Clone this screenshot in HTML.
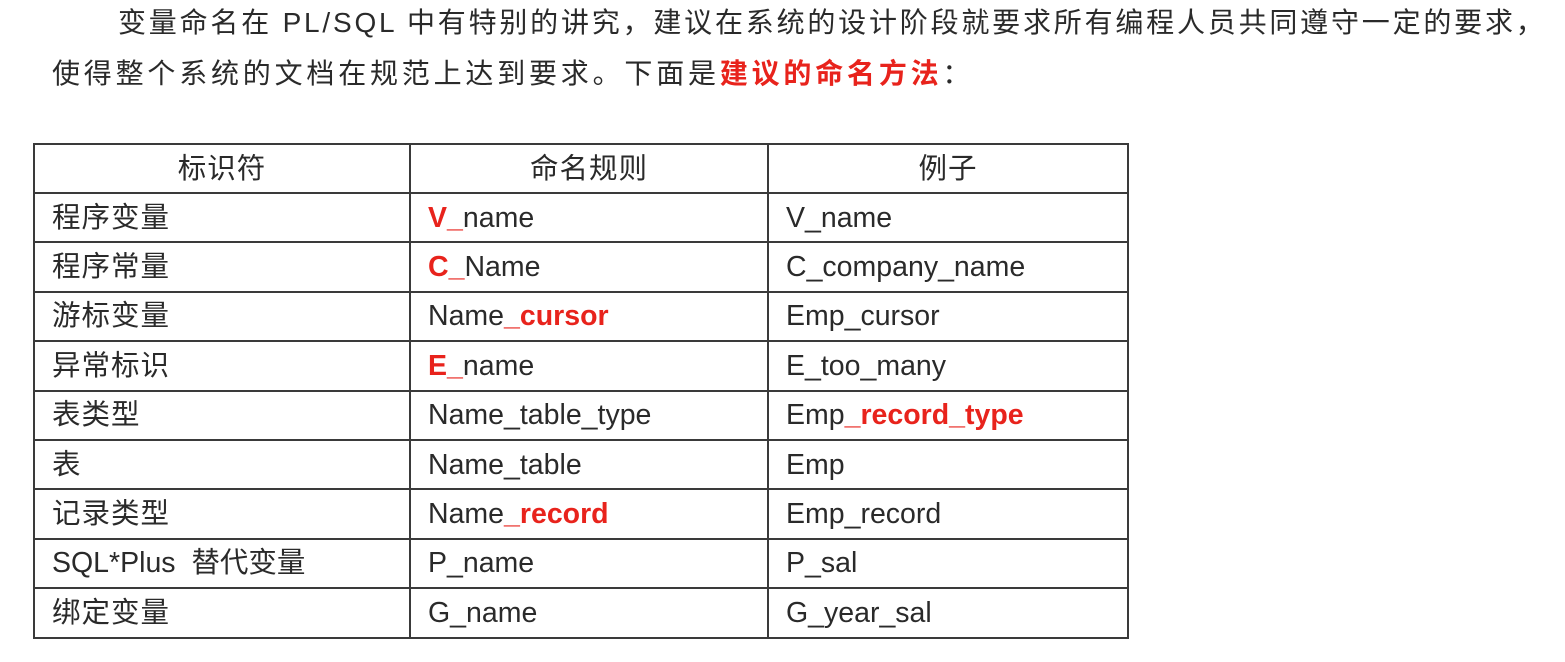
<!DOCTYPE html>
<html><head><meta charset="utf-8"><style>
body{margin:0;width:1565px;height:662px;background:#fff;overflow:hidden;font-family:"Liberation Sans","Noto Sans CJK SC",sans-serif;color:#2a2a2a;position:relative}
.p{position:absolute;font-size:28px;white-space:nowrap;line-height:32px;letter-spacing:3.5px}
.r{color:#e8231c;font-weight:bold}
table{position:absolute;left:33px;top:143px;border-collapse:collapse;font-size:28.5px}
td{border:2px solid #3a3a3a;height:47.4px;padding:0 0 0 17px;white-space:nowrap;line-height:30px}
tr.h td{text-align:center;padding:0;height:47px}
.c{letter-spacing:1px}
</style></head><body>
<div class="p" style="left:118px;top:7px;letter-spacing:2.8px">变量命名在 PL/SQL 中有特别的讲究，建议在系统的设计阶段就要求所有编程人员共同遵守一定的要求，</div>
<div class="p" style="left:52px;top:58px;letter-spacing:3.8px">使得整个系统的文档在规范上达到要求。下面是<span class="r">建议的命名方法</span>：</div>
<table>
<tr class="h"><td style="width:374px" class="c">标识符</td><td style="width:356px" class="c">命名规则</td><td style="width:358px" class="c">例子</td></tr>
<tr><td class="c">程序变量</td><td><span class="r">V_</span>name</td><td>V_name</td></tr>
<tr><td class="c">程序常量</td><td><span class="r">C_</span>Name</td><td>C_company_name</td></tr>
<tr><td class="c">游标变量</td><td>Name<span class="r">_cursor</span></td><td>Emp_cursor</td></tr>
<tr><td class="c">异常标识</td><td><span class="r">E_</span>name</td><td>E_too_many</td></tr>
<tr><td class="c">表类型</td><td>Name_table_type</td><td>Emp<span class="r">_record_type</span></td></tr>
<tr><td class="c">表</td><td>Name_table</td><td>Emp</td></tr>
<tr><td class="c">记录类型</td><td>Name<span class="r">_record</span></td><td>Emp_record</td></tr>
<tr><td>SQL*Plus&nbsp; 替代变量</td><td>P_name</td><td>P_sal</td></tr>
<tr><td class="c">绑定变量</td><td>G_name</td><td>G_year_sal</td></tr>
</table>
</body></html>
